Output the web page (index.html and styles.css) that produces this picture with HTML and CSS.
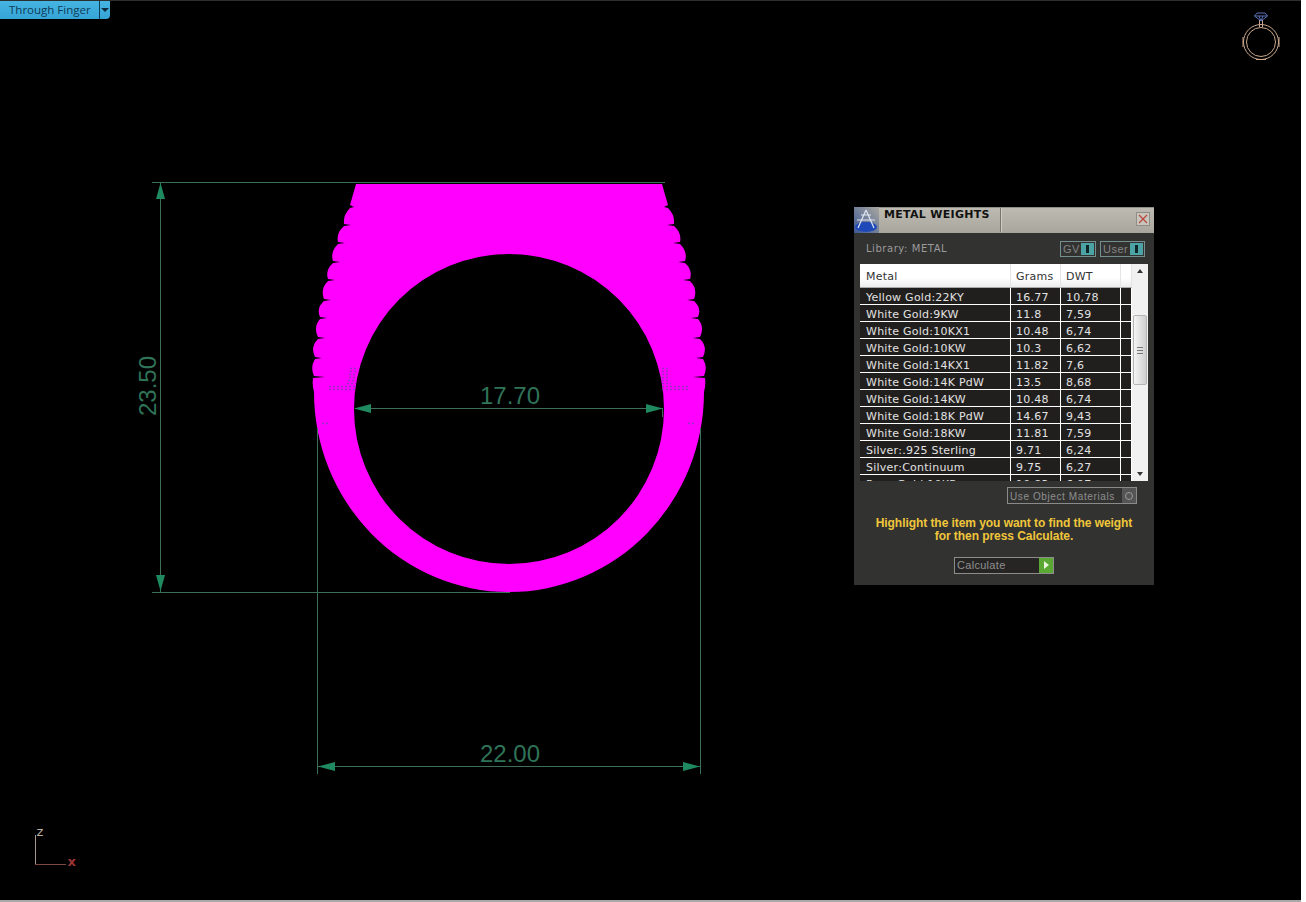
FILE: index.html
```html
<!DOCTYPE html>
<html lang="en">
<head>
  <meta charset="UTF-8">
  <title>Metal Weights</title>
  <link rel="stylesheet" href="styles.css">
</head>
<body>

  <div class="viewport">
    <!-- ring and dimensions -->
    <svg class="drawing" width="1301" height="899" viewBox="0 1 1301 899">
      <path class="ring" fill-rule="evenodd" d="M356 184 L662 184 L668 205 L664 207 L668 208
        Q675 215 674 224 L667 225 L674 226
        Q682 233 680 242 L673 243 L680 244
        Q688 252 685 261 L678 262 L685 263
        Q693 270 690 279 L683 280 L690 281
        Q698 289 694 299 L687 300 L694 301
        Q702 308 698 317 L691 318 L698 319
        Q705 327 700 337 L693 338 L700 339
        Q708 347 703 357 L696 358 L703 359
        Q708 367 704 376 L693 377 L705 378
        Q706 385 704 392 A195 200 0 0 1 314 392
        Q312 385 313 378 L325 377 L314 376
        Q310 367 315 359 L322 358 L315 357
        Q310 347 318 339 L325 338 L318 337
        Q313 327 320 319 L327 318 L320 317
        Q316 308 324 301 L331 300 L324 299
        Q320 289 328 281 L335 280 L328 279
        Q325 270 333 263 L340 262 L333 261
        Q330 252 338 244 L345 243 L338 242
        Q336 233 344 226 L351 225 L344 224
        Q343 215 350 208 L354 207 L350 205 Z
        M354 409 A155 155 0 1 0 664 409 A155 155 0 1 0 354 409 Z"/>

      <!-- mesh showing through the metal -->
      <path class="mesh" d="M350 368.5H356 M350 371.5H356 M349 374.5H356 M349 377.5H356 M348 380.5H356 M347 383.5H356
        M329 386.5H355 M329 389.5H355 M322 423.5H330
        M662 368.5H668 M662 371.5H668 M662 374.5H669 M662 377.5H669 M662 380.5H670 M662 383.5H671
        M662 386.5H689 M662 389.5H689 M688 423.5H696"/>

      <g class="dim-line">
        <line x1="152" y1="182.5" x2="665" y2="182.5"/>
        <line x1="152" y1="592.5" x2="510" y2="592.5"/>
        <line x1="160.5" y1="183" x2="160.5" y2="592"/>
        <line x1="317.5" y1="428" x2="317.5" y2="774"/>
        <line x1="700.5" y1="428" x2="700.5" y2="774"/>
        <line x1="318" y1="766.5" x2="700" y2="766.5"/>
        <line x1="355" y1="408.5" x2="663" y2="408.5"/>
        <line x1="662.5" y1="408" x2="662.5" y2="417"/>
      </g>

      <g class="dim-arrow">
        <polygon points="160.5,183 156,199 165,199"/>
        <polygon points="160.5,591 156,575 165,575"/>
        <polygon points="318,766.5 335,762 335,771"/>
        <polygon points="700,766.5 683,762 683,771"/>
        <polygon points="354,408.5 371,404 371,413"/>
        <polygon points="663,408.5 646,404 646,413"/>
      </g>

      <text class="dim-text" x="510" y="404">17.70</text>
      <text class="dim-text" x="510" y="762">22.00</text>
      <text class="dim-text" transform="translate(156 386) rotate(-90)">23.50</text>

      <!-- axis -->
      <line class="axis-z" x1="35.5" y1="835" x2="35.5" y2="864"/>
      <line class="axis-x" x1="35" y1="864.5" x2="66" y2="864.5"/>
      <text class="axis-label label-z" x="36.5" y="836">z</text>
      <text class="axis-label label-x" x="67.5" y="866">x</text>

      <!-- ring view icon -->
      <g class="view-icon">
        <circle cx="1261" cy="42" r="17.5"/>
        <circle cx="1261" cy="42" r="14.5"/>
        <path d="M1259.5 20 V27 M1262.5 20 V27 M1243 37 V47 M1279 37 V47 M1256 59.5 H1266"/>
      </g>
      <path class="view-gem" d="M1254.5 16 L1257 13 H1265 L1267.5 16 L1261 21 Z M1254.5 16 H1267.5 M1259 16 L1261 21 L1263 16"/>
    </svg>

    <div class="view-tab">
      <span class="view-tab-label">Through Finger</span>
      <span class="view-tab-arrow"></span>
    </div>

    <div class="panel">
      <div class="panel-title">
        <svg class="panel-logo" width="25" height="26" viewBox="0 0 25 26">
          <defs>
            <linearGradient id="logo-bg" x1="1" y1="0" x2="0" y2="1">
              <stop offset="0" stop-color="#a9a89f"/>
              <stop offset="1" stop-color="#3c5796"/>
            </linearGradient>
          </defs>
          <rect width="25" height="26" fill="url(#logo-bg)"/>
          <ellipse cx="12" cy="20" rx="11" ry="5" fill="#1f49b8"/>
          <path d="M12 3 L4 21 M12 3 L20 21 M3 13 H21 M7 8 L17 8" stroke="#dfe6f2" stroke-width="1.2" fill="none"/>
        </svg>
        <span class="panel-name">METAL WEIGHTS</span>
        <span class="panel-rule"></span>
        <span class="panel-close">
          <svg width="10" height="10" viewBox="0 0 10 10">
            <path d="M1 1 L9 9 M9 1 L1 9" stroke="#b8433a" stroke-width="1.1"/>
          </svg>
        </span>
      </div>

      <div class="library-row">
        <span class="library-name">Library: METAL</span>
        <span class="toggle toggle-gv">GV <i class="toggle-knob"></i></span>
        <span class="toggle toggle-user">User <i class="toggle-knob"></i></span>
      </div>

      <div class="grid-wrap">
        <div class="grid">
          <table>
            <thead>
              <tr><th class="col-metal">Metal</th><th class="col-grams">Grams</th><th class="col-dwt">DWT</th><th class="col-end"></th></tr>
            </thead>
            <tbody>
              <tr><td>Yellow Gold:22KY</td><td>16.77</td><td>10,78</td><td></td></tr>
              <tr><td>White Gold:9KW</td><td>11.8</td><td>7,59</td><td></td></tr>
              <tr><td>White Gold:10KX1</td><td>10.48</td><td>6,74</td><td></td></tr>
              <tr><td>White Gold:10KW</td><td>10.3</td><td>6,62</td><td></td></tr>
              <tr><td>White Gold:14KX1</td><td>11.82</td><td>7,6</td><td></td></tr>
              <tr><td>White Gold:14K PdW</td><td>13.5</td><td>8,68</td><td></td></tr>
              <tr><td>White Gold:14KW</td><td>10.48</td><td>6,74</td><td></td></tr>
              <tr><td>White Gold:18K PdW</td><td>14.67</td><td>9,43</td><td></td></tr>
              <tr><td>White Gold:18KW</td><td>11.81</td><td>7,59</td><td></td></tr>
              <tr><td>Silver:.925 Sterling</td><td>9.71</td><td>6,24</td><td></td></tr>
              <tr><td>Silver:Continuum</td><td>9.75</td><td>6,27</td><td></td></tr>
              <tr><td>Rose Gold:10KR</td><td>10.83</td><td>6,97</td><td></td></tr>
            </tbody>
          </table>
        </div>
        <div class="scrollbar">
          <span class="scroll-up"></span>
          <span class="scroll-thumb"><i class="scroll-grip"></i></span>
          <span class="scroll-down"></span>
        </div>
      </div>

      <div class="object-row">
        <span class="object-btn"><span class="object-label">Use Object Materials</span><i class="object-knob"></i></span>
      </div>

      <p class="hint">Highlight the item you want to find the weight<br>for then press Calculate.</p>

      <div class="calc-row">
        <span class="calc-btn"><span class="calc-label">Calculate</span><i class="calc-go"></i></span>
      </div>
    </div>
  </div>

</body>
</html>
```

FILE: styles.css
```css
html, body {
  margin: 0;
  padding: 0;
  background: #fff;
}

body {
  width: 1306px;
  height: 902px;
  overflow: hidden;
}

.viewport {
  position: relative;
  width: 1301px;
  height: 899px;
  background: #000;
  border-top: 1px solid #2c2f2f;
  border-bottom: 2px solid #a9a9a9;
}

.drawing {
  position: absolute;
  left: 0;
  top: 0;
  display: block;
}

.ring {
  fill: #ff00ff;
}

.mesh {
  fill: none;
  stroke: #9a2cc4;
  stroke-width: 1.5;
  stroke-dasharray: 2 2;
}

.dim-line line {
  stroke: #3c6e58;
  stroke-width: 1;
}

.dim-arrow polygon {
  fill: #1f8a5f;
}

.dim-text {
  font-family: "Liberation Sans", Arial, sans-serif;
  font-size: 24px;
  fill: #2f7358;
  text-anchor: middle;
}

.axis-z {
  stroke: #a8988c;
}

.axis-x {
  stroke: #7c4a40;
}

.axis-label {
  font-family: "DejaVu Sans", sans-serif;
  font-size: 13px;
}

.label-z {
  fill: #bdb0a3;
}

.label-x {
  fill: #9c3434;
  font-weight: bold;
}

.view-icon circle,
.view-icon path {
  fill: none;
  stroke: #c9a88e;
  stroke-width: 1;
}

.view-gem {
  fill: none;
  stroke: #5a70b8;
  stroke-width: 1;
}

/* viewport tab */
.view-tab {
  position: absolute;
  left: 0;
  top: 0;
  width: 110px;
  height: 18px;
  display: flex;
  align-items: center;
  background: linear-gradient(#45b4e2, #36a5d6);
  border-radius: 0 0 4px 0;
}

.view-tab-label {
  width: 99px;
  padding-left: 9px;
  margin-top: -2px;
  box-sizing: border-box;
  font-family: "Open Sans", sans-serif;
  font-size: 11.5px;
  color: #0e3c58;
  white-space: nowrap;
}

.view-tab-arrow {
  position: relative;
  flex: 1;
  height: 18px;
  border-left: 1px solid #0e3c58;
}

.view-tab-arrow::after {
  content: "";
  position: absolute;
  left: 1px;
  top: 7px;
  border: 4px solid transparent;
  border-top: 4px solid #0e2c40;
  border-bottom: 0;
}

/* metal weights panel */
.panel {
  position: absolute;
  left: 854px;
  top: 206px;
  width: 300px;
  height: 378px;
  display: flex;
  flex-direction: column;
  background: #323231;
  font-family: "DejaVu Sans", Verdana, sans-serif;
}

.panel-title {
  display: flex;
  height: 26px;
  background: linear-gradient(#bdbab1, #a9a69d);
  border-top: 1px solid #8f8d85;
  box-sizing: border-box;
}

.panel-logo {
  display: block;
  margin-top: -1px;
}

.panel-name {
  margin-left: 5px;
  width: 116px;
  font-size: 11px;
  font-weight: bold;
  line-height: 11px;
  padding-top: 1px;
  letter-spacing: 0.3px;
  color: #111;
  white-space: nowrap;
}

.panel-rule {
  width: 1px;
  height: 24px;
  background: #77756d;
  box-shadow: 1px 0 0 #cfcdc4;
}

.panel-close {
  display: flex;
  align-items: center;
  justify-content: center;
  width: 14px;
  height: 14px;
  margin: 4px 0 0 135px;
  background: #c8c5bc;
  border: 1px solid #8f8d85;
  box-sizing: border-box;
}

.library-row {
  display: flex;
  align-items: center;
  height: 31px;
  padding: 0 9px 0 12px;
  color: #9b9b9b;
  font-size: 10px;
}

.library-name {
  flex: 1;
  letter-spacing: 0.55px;
  margin-top: -1px;
}

.toggle {
  display: flex;
  align-items: center;
  justify-content: space-between;
  height: 16px;
  padding: 0 1px 0 2px;
  margin-left: 4px;
  box-sizing: border-box;
  border: 1px solid #71908f;
  color: #858585;
  font-family: "Liberation Sans", Arial, sans-serif;
  font-size: 11px;
  line-height: 16px;
  letter-spacing: 0.5px;
}

.toggle-gv {
  width: 36px;
}

.toggle-user {
  width: 45px;
}

.toggle-knob {
  position: relative;
  width: 13px;
  height: 12px;
  background: #4ba3a5;
}

.toggle-knob::after {
  content: "";
  position: absolute;
  left: 5px;
  top: 2px;
  width: 3px;
  height: 8px;
  background: #0f2526;
}

.grid-wrap {
  display: flex;
  height: 217px;
  margin-left: 6px;
  width: 288px;
}

.grid {
  width: 272px;
  overflow: hidden;
  background: #211f1e;
}

.grid table {
  width: 272px;
  table-layout: fixed;
  border-collapse: separate;
  border-spacing: 0;
  font-size: 11px;
  letter-spacing: 0.25px;
}

.grid th {
  height: 24px;
  padding: 2px 0 0 5px;
  box-sizing: border-box;
  background: linear-gradient(#fff 60%, #ececec);
  border-right: 1px solid #e4e4e4;
  border-bottom: 1px solid #aaa;
  color: #333;
  font-weight: normal;
  text-align: left;
}

.grid th:first-child,
.grid td:first-child {
  padding-left: 6px;
}

.grid td {
  height: 17px;
  padding: 3px 0 0 5px;
  box-sizing: border-box;
  border-right: 1px solid #fff;
  border-bottom: 1px solid #fff;
  color: #e2e2e2;
  line-height: 13px;
  white-space: nowrap;
  overflow: hidden;
}

.col-metal {
  width: 151px;
}

.col-grams {
  width: 50px;
}

.col-dwt {
  width: 60px;
}

.col-end {
  width: 11px;
}

.scrollbar {
  position: relative;
  width: 16px;
  background: #f1f1f1;
}

.scroll-up,
.scroll-down {
  position: absolute;
  left: 5px;
  border: 3.5px solid transparent;
}

.scroll-up {
  top: 5px;
  border-top: 0;
  border-bottom: 4px solid #333;
}

.scroll-down {
  bottom: 5px;
  border-bottom: 0;
  border-top: 4px solid #333;
}

.scroll-thumb {
  position: absolute;
  left: 1px;
  top: 51px;
  width: 14px;
  height: 70px;
  box-sizing: border-box;
  background: linear-gradient(90deg, #f4f4f4, #cfcfcf);
  border: 1px solid #b5b5b5;
  border-radius: 2px;
}

.scroll-grip {
  position: absolute;
  left: 3px;
  top: 31px;
  width: 6px;
  height: 5px;
  border-top: 1px solid #777;
  border-bottom: 1px solid #777;
  background: linear-gradient(#777, #777) center / 100% 1px no-repeat;
}

.object-row {
  display: flex;
  justify-content: flex-end;
  padding: 6px 17px 0 0;
}

.object-btn {
  display: flex;
  align-items: center;
  justify-content: space-between;
  width: 130px;
  height: 17px;
  padding: 0 0 0 2px;
  box-sizing: border-box;
  border: 1px solid #8a8a8a;
  color: #8f8f8f;
  font-family: "Liberation Sans", Arial, sans-serif;
  font-size: 10px;
  letter-spacing: 0.6px;
  white-space: nowrap;
}

.object-label {
  padding-top: 1px;
}

.object-knob {
  position: relative;
  width: 14px;
  height: 15px;
  background: #555;
}

.object-knob::after {
  content: "";
  position: absolute;
  left: 3px;
  top: 4px;
  width: 6px;
  height: 6px;
  border: 1px solid #9a9a9a;
  border-radius: 50%;
}

.hint {
  margin: 13px 0 0;
  font-family: "Liberation Sans", Arial, sans-serif;
  font-size: 12px;
  font-weight: bold;
  line-height: 13px;
  letter-spacing: -0.06px;
  color: #f0c63a;
  text-align: center;
}

.calc-row {
  display: flex;
  justify-content: center;
  margin-top: 14px;
}

.calc-btn {
  display: flex;
  align-items: center;
  justify-content: space-between;
  width: 100px;
  height: 17px;
  padding: 0 0 0 2px;
  box-sizing: border-box;
  border: 1px solid #8d8d8d;
  background: #262524;
  color: #8f8f8f;
  font-family: "Liberation Sans", Arial, sans-serif;
  font-size: 11px;
  letter-spacing: 0.3px;
}

.calc-label {
  margin-top: -2px;
}

.calc-go {
  position: relative;
  width: 14px;
  height: 15px;
  background: #5aa733;
}

.calc-go::after {
  content: "";
  position: absolute;
  left: 5px;
  top: 3px;
  border: 4.5px solid transparent;
  border-left: 5px solid #e8f5dc;
  border-right: 0;
}
```
